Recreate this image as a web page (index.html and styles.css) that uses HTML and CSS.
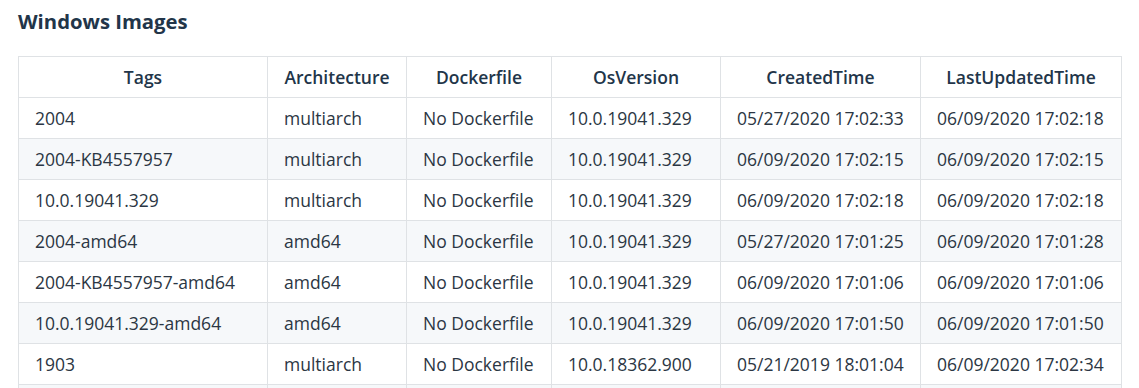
FILE: index.html
```html
<!DOCTYPE html>
<html>
<head>
<meta charset="utf-8">
<link rel="stylesheet" href="styles.css">
</head>
<body>
<div class="page">
  <h2 class="title">Windows Images</h2>
  <table class="images">
    <colgroup>
      <col class="c-tags">
      <col class="c-arch">
      <col class="c-docker">
      <col class="c-os">
      <col class="c-created">
      <col class="c-updated">
    </colgroup>
    <thead>
      <tr><th>Tags</th><th>Architecture</th><th>Dockerfile</th><th>OsVersion</th><th>CreatedTime</th><th>LastUpdatedTime</th></tr>
    </thead>
    <tbody>
      <tr><td>2004</td><td>multiarch</td><td>No Dockerfile</td><td>10.0.19041.329</td><td>05/27/2020 17:02:33</td><td>06/09/2020 17:02:18</td></tr>
      <tr><td>2004-KB4557957</td><td>multiarch</td><td>No Dockerfile</td><td>10.0.19041.329</td><td>06/09/2020 17:02:15</td><td>06/09/2020 17:02:15</td></tr>
      <tr><td>10.0.19041.329</td><td>multiarch</td><td>No Dockerfile</td><td>10.0.19041.329</td><td>06/09/2020 17:02:18</td><td>06/09/2020 17:02:18</td></tr>
      <tr><td>2004-amd64</td><td>amd64</td><td>No Dockerfile</td><td>10.0.19041.329</td><td>05/27/2020 17:01:25</td><td>06/09/2020 17:01:28</td></tr>
      <tr><td>2004-KB4557957-amd64</td><td>amd64</td><td>No Dockerfile</td><td>10.0.19041.329</td><td>06/09/2020 17:01:06</td><td>06/09/2020 17:01:06</td></tr>
      <tr><td>10.0.19041.329-amd64</td><td>amd64</td><td>No Dockerfile</td><td>10.0.19041.329</td><td>06/09/2020 17:01:50</td><td>06/09/2020 17:01:50</td></tr>
      <tr><td>1903</td><td>multiarch</td><td>No Dockerfile</td><td>10.0.18362.900</td><td>05/21/2019 18:01:04</td><td>06/09/2020 17:02:34</td></tr>
      <tr><td>1903-amd64</td><td>amd64</td><td>No Dockerfile</td><td>10.0.18362.900</td><td>05/21/2019 18:00:33</td><td>06/09/2020 17:02:30</td></tr>
    </tbody>
  </table>
</div>
</body>
</html>
```

FILE: styles.css
```css
html, body {
  margin: 0;
  padding: 0;
  background: #ffffff;
}

.page {
  padding: 9px 18px 0 18px;
  font-family: "Open Sans", "Liberation Sans", sans-serif;
  color: #2b3643;
}

.title {
  margin: 0 0 22px 0;
  font-size: 20.3px;
  line-height: 25px;
  font-weight: 700;
  color: #223549;
}

.images {
  width: 1103px;
  border-collapse: collapse;
  table-layout: fixed;
  font-size: 17.5px;
}

.c-tags { width: 249px; }
.c-arch { width: 139px; }
.c-docker { width: 145px; }
.c-os { width: 169px; }
.c-created { width: 200px; }
.c-updated { width: 201px; }

.images th,
.images td {
  border: 1px solid #dfe2e5;
  padding: 8px 16px;
  line-height: 24px;
  white-space: nowrap;
  text-align: left;
}

.images th {
  font-weight: 600;
  text-align: center;
  color: #223549;
}

.images tbody tr:nth-child(even) {
  background: #f6f8fa;
}
```
